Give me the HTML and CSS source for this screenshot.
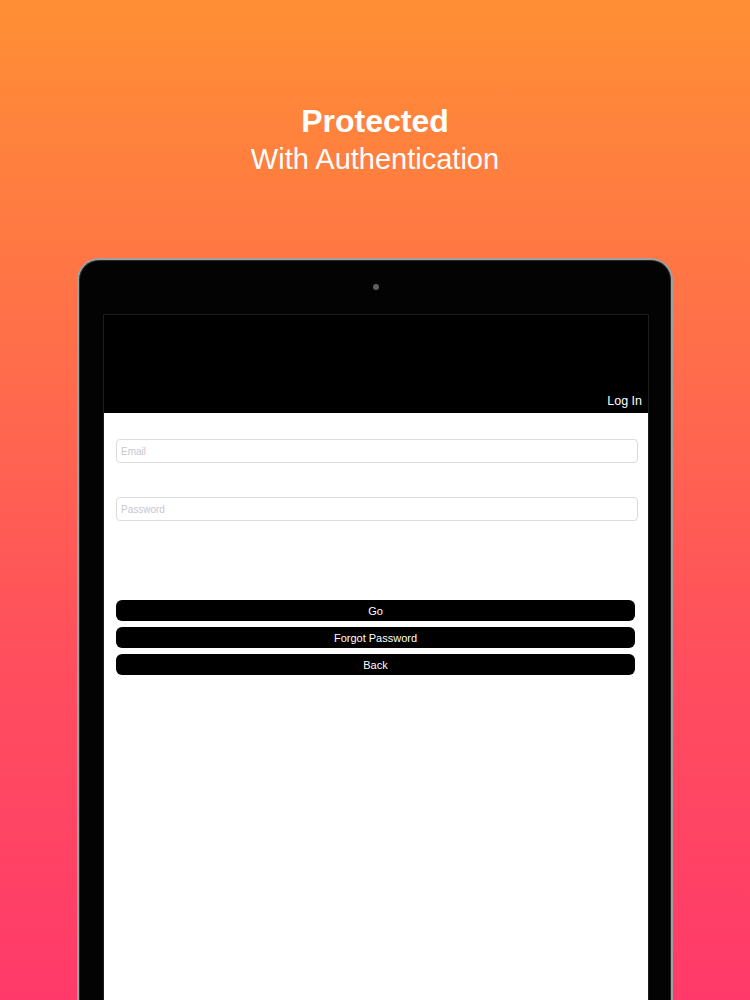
FILE: index.html
```html
<!DOCTYPE html>
<html>
<head>
<meta charset="utf-8">
<link rel="stylesheet" href="styles.css">
</head>
<body>
<div class="page">
  <div class="headline">
    <div class="title">Protected</div>
    <div class="subtitle">With Authentication</div>
  </div>
  <div class="tablet">
    <div class="camera"></div>
    <div class="screen">
      <div class="navbar"><span class="nav-title">Log In</span></div>
      <div class="content">
        <div class="field"><span class="placeholder">Email</span></div>
        <div class="field field-second"><span class="placeholder">Password</span></div>
        <div class="buttons">
          <div class="btn">Go</div>
          <div class="btn">Forgot Password</div>
          <div class="btn">Back</div>
        </div>
      </div>
    </div>
  </div>
</div>
</body>
</html>
```
FILE: styles.css
```css
html, body {
  margin: 0;
  padding: 0;
}
body {
  font-family: "Liberation Sans", Arial, sans-serif;
}
.page {
  width: 750px;
  height: 1000px;
  overflow: hidden;
  background: linear-gradient(180deg, #ff8f34 0%, #ff6e4a 35%, #ff4f5d 65%, #ff3a6a 100%);
  display: flex;
  flex-direction: column;
  align-items: center;
}
.headline {
  padding-top: 102px;
  text-align: center;
  color: #fff;
}
.title {
  font-size: 32px;
  font-weight: bold;
  line-height: 39px;
}
.subtitle {
  font-size: 29px;
  line-height: 36px;
}
.tablet {
  margin-top: 81px;
  width: 596px;
  height: 760px;
  flex-shrink: 0;
  background: #030303;
  border: 2px solid #a0a0a0;
  border-bottom: none;
  border-radius: 22px 22px 0 0;
  box-shadow: inset 0 0 0 1px #2a2a2a;
  padding: 54px 22px 0 24px;
  box-sizing: border-box;
  position: relative;
}
.camera {
  position: absolute;
  left: 294px;
  top: 24px;
  width: 6px;
  height: 6px;
  border-radius: 50%;
  background: #606060;
}
.screen {
  height: 100%;
  border: 1px solid #1c1c1c;
  border-bottom: none;
  display: flex;
  flex-direction: column;
}
.navbar {
  height: 98px;
  background: #000;
  display: flex;
  align-items: flex-end;
  justify-content: flex-end;
  padding: 0 6px 5px 0;
  box-sizing: border-box;
}
.nav-title {
  color: #fff;
  font-size: 12.5px;
}
.content {
  flex: 1;
  background: #fff;
  padding: 26px 10px 0 12px;
}
.field {
  height: 24px;
  border: 1px solid #dcdcdc;
  border-radius: 4px;
  box-sizing: border-box;
  display: flex;
  align-items: center;
  padding-left: 4px;
}
.field-second {
  margin-top: 34px;
}
.placeholder {
  color: #c8c6cf;
  font-size: 10px;
}
.buttons {
  margin-top: 79px;
  margin-right: 3px;
  display: flex;
  flex-direction: column;
  gap: 6px;
}
.btn {
  height: 21px;
  background: #000;
  color: #fff;
  border-radius: 6px;
  font-size: 11px;
  display: flex;
  align-items: center;
  justify-content: center;
}
```
